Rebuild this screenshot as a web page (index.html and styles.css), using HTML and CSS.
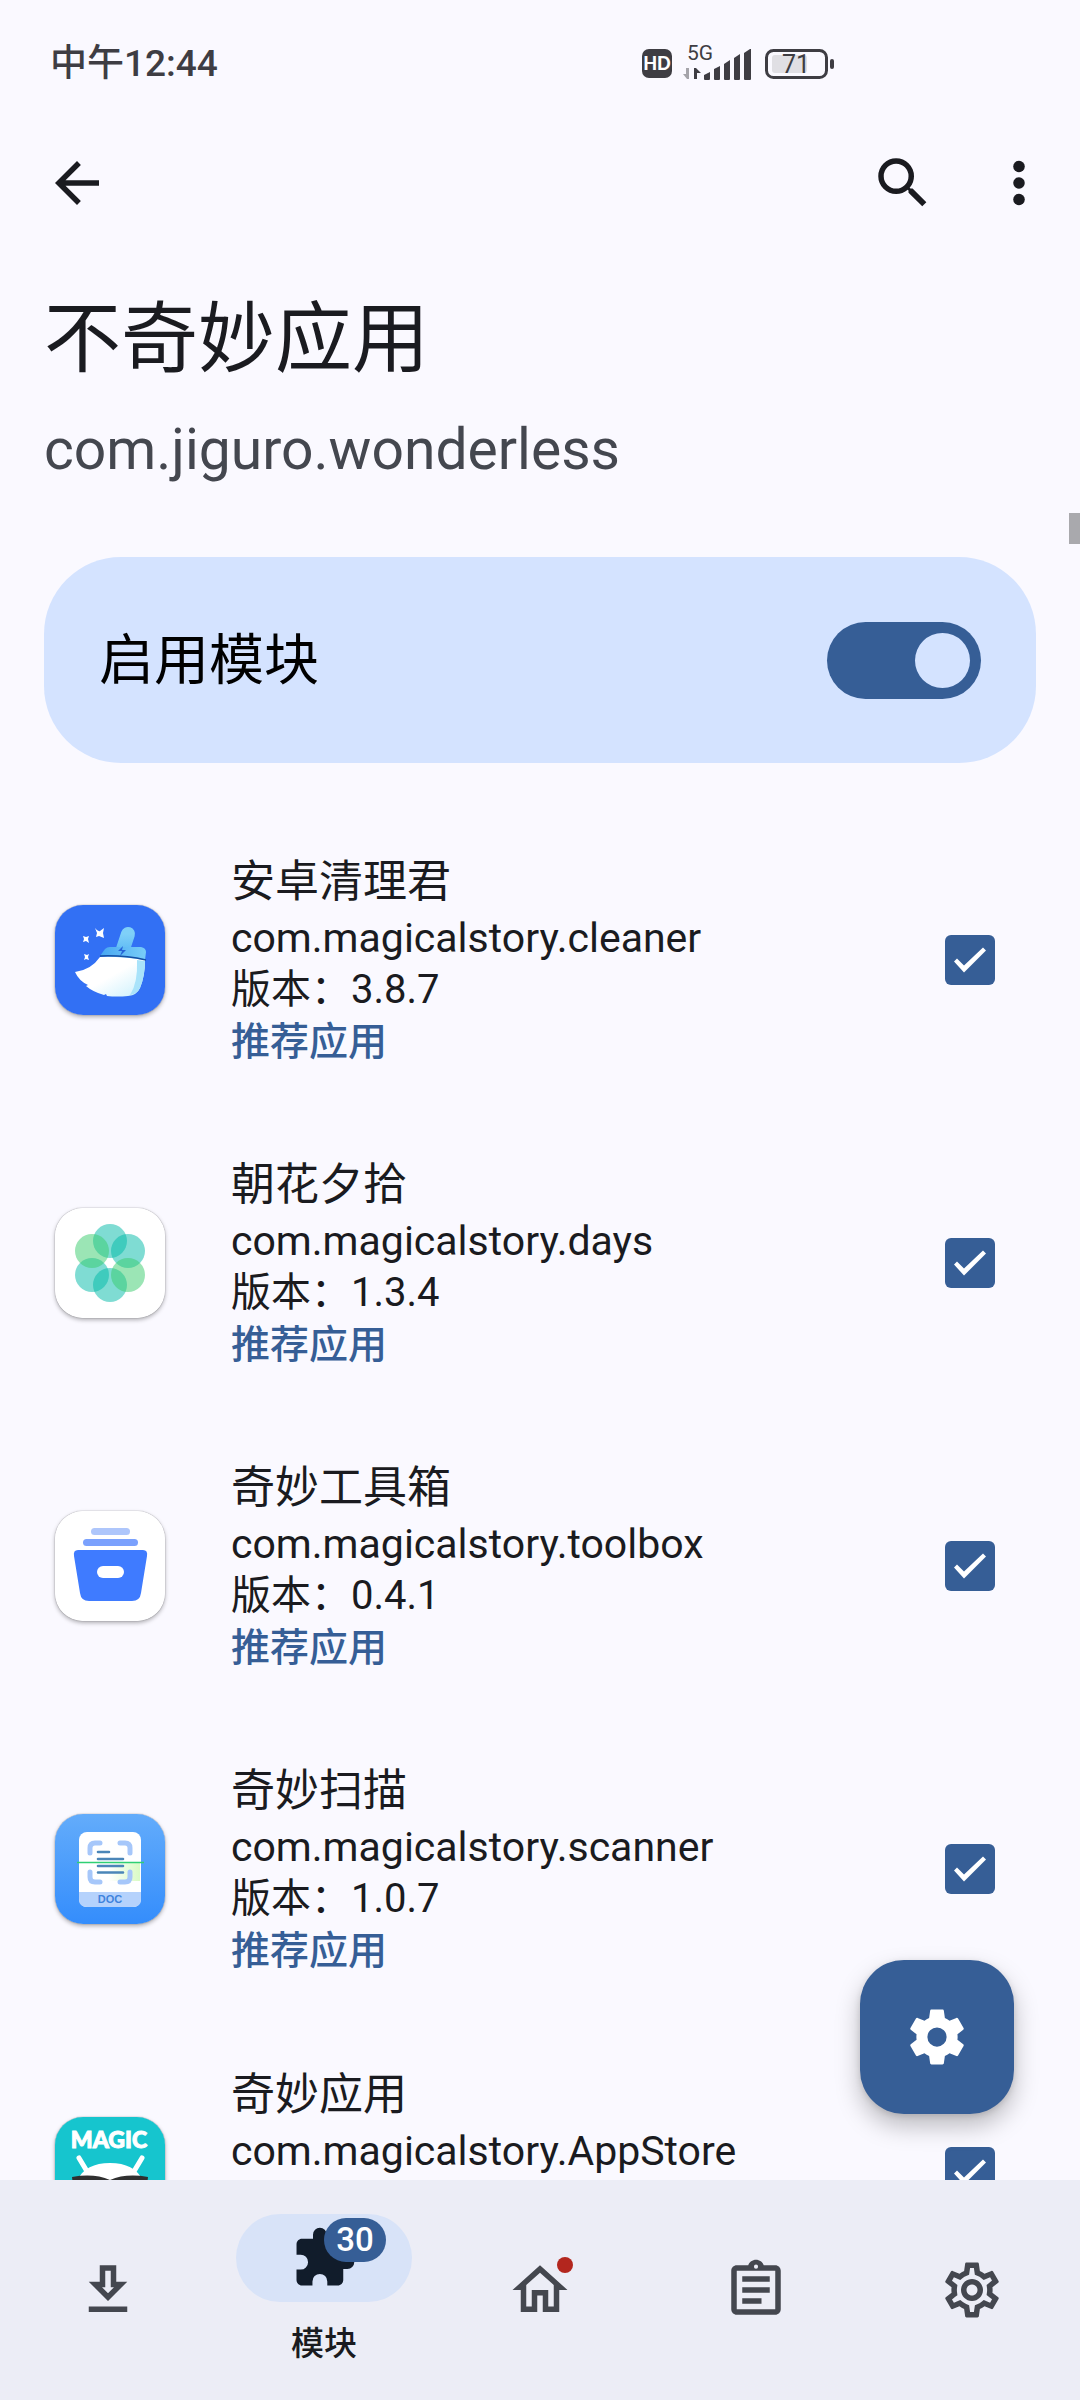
FILE: index.html
```html
<!DOCTYPE html>
<html lang="zh-CN">
<head>
<meta charset="utf-8">
<meta name="viewport" content="width=device-width, initial-scale=1">
<title>不奇妙应用</title>
<link rel="stylesheet" href="styles.css">
</head>
<body>
<div class="app">
  <div class="status-bar">
    <time class="clock">中午12:44</time>
    <svg class="status-icons" viewBox="0 0 194 48" aria-hidden="true">
      <rect x="2" y="9" width="30" height="29" rx="7" fill="#3e3d43"/>
      <text x="17" y="30" class="hd-text">HD</text>
      <text x="60" y="20" class="net-text">5G</text>
      <path d="M49 28v11h-2l-4-5h3v-6z" fill="#a5a4aa"/>
      <path d="M54 39V28h2l5 5h-4v6z" fill="#3e3d43"/>
      <path d="M64 39v-4l6-3v7q0 1-1 1h-4q-1 0-1-1zM74 39V29l6-3v13q0 1-1 1h-4q-1 0-1-1zM84 39V24l6-4v19q0 1-1 1h-4q-1 0-1-1zM94 39V18l6-4v25q0 1-1 1h-4q-1 0-1-1zM104 39V13l6-4h1v30q0 1-1 1h-5q-1 0-1-1z" fill="#3e3d43"/>
      <rect x="126.500" y="10.500" width="60" height="27" rx="7" fill="none" stroke="#3e3d43" stroke-width="3"/>
      <rect x="132" y="15" width="35" height="18" rx="3" fill="#e0dfe4"/>
      <rect x="190" y="19" width="4" height="10" rx="2" fill="#3e3d43"/>
      <text x="156" y="33" class="battery-text">71</text>
    </svg>
  </div>

  <header class="toolbar">
    <button class="icon-button" type="button" aria-label="返回">
      <svg class="icon" viewBox="0 0 24 24"><path d="M20 11H7.830l5.590-5.590L12 4l-8 8 8 8 1.410-1.410L7.830 13H20z"/></svg>
    </button>
    <button class="icon-button toolbar-end" type="button" aria-label="搜索">
      <svg class="icon" viewBox="0 0 24 24"><path d="M15.500 14h-.790l-.280-.270A6.471 6.471 0 0 0 16 9.500 6.500 6.500 0 1 0 9.500 16c1.610 0 3.090-.590 4.230-1.570l.270.280v.790l5 4.990L20.490 19zm-6 0A4.500 4.500 0 1 1 9.500 5a4.500 4.500 0 0 1 0 9z"/></svg>
    </button>
    <button class="icon-button" type="button" aria-label="更多">
      <svg class="icon" viewBox="0 0 24 24"><circle cx="12" cy="6" r="2.100"/><circle cx="12" cy="12" r="2.100"/><circle cx="12" cy="18" r="2.100"/></svg>
    </button>
  </header>

  <main class="content">
    <h1 class="title">不奇妙应用</h1>
    <p class="subtitle">com.jiguro.wonderless</p>
    <label class="enable-card">
      <span>启用模块</span>
      <input class="switch" type="checkbox" role="switch" checked>
    </label>

    <ul class="app-list">
      <li>
        <label class="app-row">
          <svg class="app-icon" viewBox="0 0 110 110" aria-hidden="true">
            <defs>
              <linearGradient id="handle" x1="0" y1="0" x2="0" y2="1"><stop offset="0" stop-color="#7fd0f8"/><stop offset="1" stop-color="#5cb9f5"/></linearGradient>
              <linearGradient id="head" x1="0" y1="0" x2="1" y2="0"><stop offset="0" stop-color="#46a6f2"/><stop offset="1" stop-color="#79cdf8"/></linearGradient>
              <linearGradient id="brush" x1="0" y1="0" x2="1" y2="1"><stop offset="0.500" stop-color="#fff"/><stop offset="1" stop-color="#c9f0fc"/></linearGradient>
            </defs>
            <rect width="110" height="110" fill="#3270f4"/>
            <path d="M73 29L67 47" stroke="url(#handle)" stroke-width="14" stroke-linecap="round"/>
            <path d="M45 51l5-7q2-2 5-2h31q5 1 5 5l-1 8z" fill="url(#head)"/>
            <path d="M68 41l-5 5h4l-2 5 6-6h-4z" fill="#2563d8"/>
            <path d="M45 52q18-1 45 3 0 16-5 28-3 7-12 8-11 1-21 0l-1-2-2 1q-11-3-18-9l2-1q-9-4-13-13 16-2 25-15z" fill="url(#brush)"/>
            <path d="M82 55l8 1q0 15-5 27-3 6-10 7 8-12 7-35z" fill="#a9e3fa"/>
            <path d="M45 51q24-1 46 4" fill="none" stroke="#144fa5" stroke-width="1.500"/>
            <path d="M40 23q3 4 5 3l4-3-1 5 1 5-5-2-3 1 1-4zM28 31l3 1 3-1-1 3 1 4-3-2-3 1 1-3zM29 49l3 1 2-1-1 3 1 3-3-1-2 1 1-3z" fill="#fff"/>
          </svg>
          <span class="app-text">
            <span class="app-name">安卓清理君</span>
            <span class="app-package">com.magicalstory.cleaner</span>
            <span>版本：3.8.7</span>
            <span class="app-tag">推荐应用</span>
          </span>
          <input class="check" type="checkbox" checked>
        </label>
      </li>
      <li>
        <label class="app-row">
          <svg class="app-icon" viewBox="0 0 110 110" aria-hidden="true">
            <rect width="110" height="110" fill="#fff"/>
            <g fill="#00b9a8" fill-opacity="0.500">
              <circle cx="55" cy="33" r="17"/><circle cx="73" cy="43" r="17"/><circle cx="37" cy="67" r="17"/><circle cx="55" cy="77" r="17"/>
            </g>
            <g fill="#38cc6b" fill-opacity="0.500"><circle cx="37" cy="43" r="17"/><circle cx="73" cy="67" r="17"/></g>
          </svg>
          <span class="app-text">
            <span class="app-name">朝花夕拾</span>
            <span class="app-package">com.magicalstory.days</span>
            <span>版本：1.3.4</span>
            <span class="app-tag">推荐应用</span>
          </span>
          <input class="check" type="checkbox" checked>
        </label>
      </li>
      <li>
        <label class="app-row">
          <svg class="app-icon" viewBox="0 0 110 110" aria-hidden="true">
            <rect width="110" height="110" fill="#fff"/>
            <rect x="36" y="17" width="39" height="7" rx="3.500" fill="#aec6fb"/>
            <rect x="28" y="28" width="55" height="7" rx="3.500" fill="#7ba1fd"/>
            <path d="M23 39h65q5 0 4 6l-6 37q-1 8-9 8H34q-8 0-9-8l-6-37q-1-6 4-6z" fill="#3f7bff"/>
            <rect x="42" y="55" width="27" height="12" rx="6" fill="#fff"/>
          </svg>
          <span class="app-text">
            <span class="app-name">奇妙工具箱</span>
            <span class="app-package">com.magicalstory.toolbox</span>
            <span>版本：0.4.1</span>
            <span class="app-tag">推荐应用</span>
          </span>
          <input class="check" type="checkbox" checked>
        </label>
      </li>
      <li>
        <label class="app-row">
          <svg class="app-icon" viewBox="0 0 110 110" aria-hidden="true">
            <defs>
              <linearGradient id="sky" x1="0" y1="0" x2="0" y2="1"><stop offset="0" stop-color="#63acfb"/><stop offset="1" stop-color="#348dfc"/></linearGradient>
              <linearGradient id="scan" x1="0" y1="0" x2="1" y2="0"><stop offset="0.300" stop-color="#fff"/><stop offset="1" stop-color="#d9fbc5"/></linearGradient>
            </defs>
            <rect width="110" height="110" fill="url(#sky)"/>
            <rect x="24" y="18" width="62" height="75" rx="8" fill="#fff"/>
            <path d="M40 49h45v18H52z" fill="url(#scan)"/>
            <path d="M24 78h62v7q0 8-8 8H32q-8 0-8-8z" fill="#b5d2fc"/>
            <path d="M35 39v-5q0-5 5-5h5M65 29h5q5 0 5 5v5M35 58v5q0 5 5 5h5M65 68h5q5 0 5-5v-5" fill="none" stroke="#a6c7fa" stroke-width="5" stroke-linecap="round"/>
            <path d="M43 38h11M43 45h25M43 52h25M43 58.500h25" stroke="#4b86b8" stroke-width="2.600" stroke-linecap="round"/>
            <path d="M22 48.500h67" stroke="#2fd074" stroke-width="1.500"/>
            <text x="55" y="89" class="doc-text">DOC</text>
          </svg>
          <span class="app-text">
            <span class="app-name">奇妙扫描</span>
            <span class="app-package">com.magicalstory.scanner</span>
            <span>版本：1.0.7</span>
            <span class="app-tag">推荐应用</span>
          </span>
          <input class="check" type="checkbox" checked>
        </label>
      </li>
      <li>
        <label class="app-row">
          <svg class="app-icon" viewBox="0 0 110 110" aria-hidden="true">
            <rect width="110" height="110" fill="#16c5ce"/>
            <text x="54" y="31" class="magic-text">MAGIC</text>
            <path d="M24 41l9 15M87 41l-9 15" stroke="#fff" stroke-width="5" stroke-linecap="round"/>
            <path d="M22 64q8-18 33-18t33 18v20H22z" fill="#fff"/>
            <path d="M17 60q22-4 38 3 16-7 38-3l-2 18q-26 8-36-8-10 16-36 8z" fill="#303030"/>
          </svg>
          <span class="app-text">
            <span class="app-name">奇妙应用</span>
            <span class="app-package">com.magicalstory.AppStore</span>
          </span>
          <input class="check" type="checkbox" checked>
        </label>
      </li>
    </ul>
  </main>

  <span class="scroll-thumb"></span>

  <nav class="bottom-nav">
    <button class="fab" type="button" aria-label="模块设置">
      <svg class="icon" viewBox="0 0 24 24"><path d="M19.430 12.980c.040-.320.070-.640.070-.980s-.030-.660-.070-.980l2.110-1.650c.190-.150.240-.420.120-.640l-2-3.460c-.120-.220-.390-.300-.610-.220l-2.490 1c-.520-.400-1.080-.730-1.690-.980l-.380-2.650C14.460 2.180 14.250 2 14 2h-4c-.250 0-.460.180-.490.420l-.380 2.650c-.610.250-1.170.590-1.690.980l-2.490-1c-.230-.090-.490 0-.610.220l-2 3.460c-.130.220-.070.490.120.640l2.110 1.650c-.040.320-.070.650-.070.980s.030.660.070.980l-2.110 1.650c-.190.150-.240.420-.120.640l2 3.460c.120.220.390.300.610.220l2.490-1c.520.400 1.080.730 1.690.980l.380 2.650c.030.240.240.420.490.420h4c.250 0 .460-.180.490-.420l.380-2.650c.610-.250 1.170-.590 1.690-.980l2.490 1c.230.090.490 0 .610-.220l2-3.460c.120-.220.070-.490-.120-.640zM12 15.500a3.500 3.500 0 1 1 0-7 3.500 3.500 0 0 1 0 7z"/></svg>
    </button>
    <a class="nav-item" href="#repo" aria-label="仓库">
      <svg class="icon" viewBox="0 0 24 24"><path d="M13 5v6h1.170L12 13.170 9.830 11H11V5h2m2-2H9v6H5l7 7 7-7h-4V3zm4 15H5v2h14v-2z"/></svg>
    </a>
    <a class="nav-item nav-active" href="#modules" aria-current="page">
      <span class="nav-pill">
        <svg class="icon" viewBox="0 0 24 24"><path d="M20.500 11H19V7c0-1.100-.900-2-2-2h-4V3.500a2.500 2.500 0 0 0-5 0V5H4c-1.100 0-1.990.900-1.990 2v3.800H3.500a2.700 2.700 0 0 1 0 5.400H2V20c0 1.100.900 2 2 2h3.800v-1.500a2.700 2.700 0 0 1 5.400 0V22H17c1.100 0 2-.900 2-2v-4h1.500a2.500 2.500 0 0 0 0-5z"/></svg>
        <span class="badge">30</span>
      </span>
      <span class="nav-label">模块</span>
    </a>
    <a class="nav-item" href="#home" aria-label="主页">
      <svg class="icon" viewBox="0 0 24 24"><path d="M12 5.690l5 4.500V18h-2v-6H9v6H7v-7.810l5-4.500M12 3L2 12h3v8h6v-6h2v6h6v-8h3L12 3z"/></svg>
      <span class="dot"></span>
    </a>
    <a class="nav-item" href="#logs" aria-label="日志">
      <svg class="icon" viewBox="0 0 24 24"><path d="M7 15h7v2H7zm0-4h10v2H7zm0-4h10v2H7zm12-4h-4.180C14.400 1.840 13.300 1 12 1s-2.400.840-2.820 2H5c-1.100 0-2 .900-2 2v14c0 1.100.900 2 2 2h14c1.100 0 2-.900 2-2V5c0-1.100-.900-2-2-2zm-7-.250a.750.750 0 1 1 0 1.500.750.750 0 0 1 0-1.500zM19 19H5V5h14v14z"/></svg>
    </a>
    <a class="nav-item" href="#settings" aria-label="设置">
      <svg class="icon" viewBox="0 0 24 24"><path d="M19.430 12.980c.040-.320.070-.640.070-.980 0-.340-.030-.660-.070-.980l2.110-1.650c.190-.150.240-.420.120-.640l-2-3.460c-.090-.160-.260-.250-.440-.250-.060 0-.120.010-.170.030l-2.490 1c-.520-.400-1.080-.730-1.690-.980l-.380-2.650C14.460 2.180 14.250 2 14 2h-4c-.250 0-.460.180-.490.420l-.380 2.650c-.610.250-1.170.590-1.690.980l-2.490-1c-.060-.020-.120-.030-.180-.030-.170 0-.340.090-.430.250l-2 3.460c-.130.220-.070.490.120.640l2.110 1.650c-.040.320-.070.650-.070.980 0 .330.030.660.070.980l-2.110 1.650c-.190.150-.240.420-.120.640l2 3.460c.090.160.260.250.440.250.060 0 .120-.010.170-.030l2.490-1c.520.400 1.080.730 1.690.980l.380 2.650c.030.240.240.420.490.420h4c.250 0 .460-.180.490-.420l.380-2.650c.610-.250 1.170-.590 1.690-.980l2.490 1c.060.020.120.030.180.030.170 0 .340-.090.430-.250l2-3.460c.120-.220.070-.490-.120-.640l-2.110-1.650zm-1.980-1.710c.040.310.050.520.050.730 0 .210-.020.430-.050.730l-.140 1.130.890.700 1.080.840-.700 1.210-1.270-.510-1.040-.420-.900.680c-.430.320-.840.560-1.250.730l-1.060.430-.160 1.130-.200 1.350h-1.400l-.190-1.350-.160-1.130-1.060-.430c-.430-.180-.830-.410-1.230-.710l-.910-.700-1.060.430-1.270.510-.700-1.210 1.080-.840.890-.700-.140-1.130c-.030-.310-.050-.540-.050-.740s.020-.430.050-.730l.140-1.130-.890-.700-1.080-.840.700-1.210 1.270.510 1.040.420.900-.680c.430-.320.840-.560 1.250-.730l1.060-.430.160-1.130.200-1.350h1.390l.190 1.350.160 1.130 1.060.430c.430.180.830.410 1.230.710l.910.700 1.060-.430 1.270-.510.700 1.210-1.070.850-.890.700.140 1.130zM12 8c-2.210 0-4 1.790-4 4s1.790 4 4 4 4-1.790 4-4-1.790-4-4-4zm0 6c-1.100 0-2-.900-2-2s.900-2 2-2 2 .900 2 2-.900 2-2 2z"/></svg>
    </a>
  </nav>
</div>
</body>
</html>
```
FILE: styles.css
```css
:root {
  --surface: #faf9ff;
  --primary: #365e96;
  --on-surface: #1a1b20;
  --on-variant: #44474f;
}

* {
  box-sizing: border-box;
}

body {
  margin: 0;
  background: var(--surface);
  color: var(--on-surface);
  font-family: Roboto, "Noto Sans CJK SC", sans-serif;
}

button {
  padding: 0;
  border: 0;
  background: none;
  color: inherit;
}

.app {
  position: relative;
  display: flex;
  flex-direction: column;
  height: 100vh;
}

.icon {
  display: block;
  width: 66px;
  height: 66px;
  fill: currentColor;
}

/* Status bar */
.status-bar {
  display: flex;
  align-items: center;
  justify-content: space-between;
  height: 128px;
  padding: 0 246px 0 50px;
  color: #3e3d43;
}

.clock {
  font-size: 37px;
  font-weight: 500;
  line-height: 48px;
}

.status-icons {
  width: 194px;
  height: 48px;
}

.hd-text {
  font: 900 18px Lato, sans-serif;
  fill: #fff;
  text-anchor: middle;
}

.net-text {
  font-size: 21px;
  fill: #3e3d43;
  text-anchor: middle;
}

.battery-text {
  font-size: 25px;
  fill: #3e3d43;
  text-anchor: middle;
}

/* Toolbar */
.toolbar {
  display: flex;
  align-items: center;
  gap: 50px;
  height: 110px;
  padding: 0 28px 0 44px;
}

.toolbar-end {
  margin-left: auto;
}

/* Module header */
.content {
  flex: 1;
  min-height: 0;
  padding-top: 52px;
  overflow-y: auto;
  scrollbar-width: none;
}

.title {
  margin: 0 44px;
  font-size: 77px;
  font-weight: 400;
  line-height: 100px;
}

.subtitle {
  margin: 25px 44px 72px;
  color: var(--on-variant);
  font-size: 57px;
  line-height: 70px;
}

.enable-card {
  display: flex;
  align-items: center;
  justify-content: space-between;
  height: 206px;
  margin: 0 44px 45px;
  padding: 0 55px;
  border-radius: 77px;
  background: #d4e3ff;
  color: #000;
  font-size: 55px;
  line-height: 70px;
}

.switch {
  appearance: none;
  display: flex;
  justify-content: flex-end;
  width: 154px;
  height: 77px;
  margin: 0;
  padding: 11px;
  border-radius: 39px;
  background: var(--primary);
}

.switch::before {
  content: "";
  width: 55px;
  height: 55px;
  border-radius: 50%;
  background: #d4e3ff;
}

/* App list */
.app-list {
  margin: 0;
  padding: 0;
  list-style: none;
}

.app-row {
  display: flex;
  align-items: center;
  gap: 66px;
  height: 303px;
  padding: 0 85px 0 55px;
}

.app-icon {
  flex: none;
  width: 110px;
  height: 110px;
  border-radius: 28px;
  box-shadow: 0 0 1px rgba(0, 0, 0, 0.6), 0 2px 4px rgba(0, 0, 0, 0.3);
}

.app-text {
  display: grid;
  flex: 1;
  align-content: start;
  min-height: 214px;
  font-size: 40px;
  line-height: 52px;
}

.app-name {
  font-size: 44px;
  line-height: 60px;
}

.app-package {
  font-size: 41px;
}

.app-tag {
  color: var(--primary);
  font-size: 39px;
  font-weight: 500;
}

.doc-text {
  font: bold 11px "Liberation Sans", sans-serif;
  fill: #3f83dd;
  text-anchor: middle;
}

.magic-text {
  font: 900 23px Lato, sans-serif;
  fill: #fff;
  stroke: #fff;
  text-anchor: middle;
}

.check {
  appearance: none;
  width: 50px;
  height: 50px;
  margin: 0;
  border-radius: 6px;
  background: var(--primary);
}

.check::before {
  content: "";
  display: block;
  height: 50px;
  background: #fff;
  clip-path: polygon(9px 27px, 12px 24px, 19px 31px, 38px 13px, 41px 16px, 19px 38px);
}

.scroll-thumb {
  position: absolute;
  top: 513px;
  right: 0;
  width: 11px;
  height: 31px;
  background: #a9a9ad;
}

/* Bottom navigation */
.bottom-nav {
  position: relative;
  display: flex;
  height: 220px;
  background: #ecedf6;
  color: var(--on-variant);
}

.fab {
  position: absolute;
  right: 66px;
  bottom: 286px;
  display: grid;
  place-items: center;
  width: 154px;
  height: 154px;
  border-radius: 44px;
  background: var(--primary);
  color: #fff;
  box-shadow: 0 12px 24px rgba(0, 0, 0, 0.25), 0 2px 6px rgba(0, 0, 0, 0.12);
}

.nav-item {
  position: relative;
  display: flex;
  flex: 1;
  flex-direction: column;
  align-items: center;
  justify-content: center;
  gap: 20px;
  color: inherit;
  text-decoration: none;
}

.nav-pill {
  position: relative;
  display: grid;
  place-items: center;
  width: 176px;
  height: 88px;
  border-radius: 44px;
  background: #d8e3f8;
  color: #111c2b;
}

.badge {
  position: absolute;
  top: 4px;
  left: 50%;
  width: 62px;
  border-radius: 22px;
  background: var(--primary);
  color: #fff;
  font-size: 33px;
  font-weight: 500;
  line-height: 44px;
  text-align: center;
}

.nav-label {
  color: var(--on-surface);
  font-size: 33px;
  font-weight: 500;
  line-height: 44px;
}

.dot {
  position: absolute;
  top: 77px;
  left: 50%;
  width: 16px;
  height: 16px;
  margin-left: 17px;
  border-radius: 50%;
  background: #b3261e;
}
```
